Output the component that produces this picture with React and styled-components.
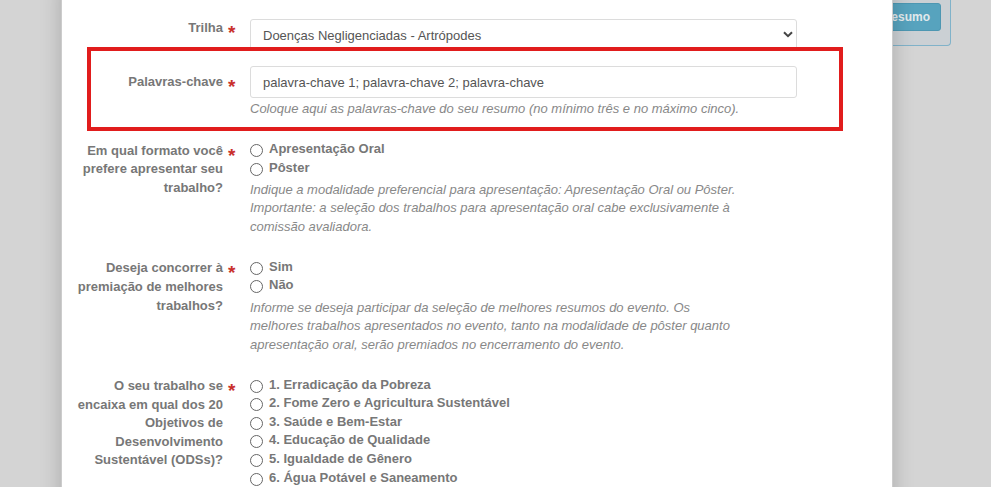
import React from "react";
import styled, { createGlobalStyle } from "styled-components";

const GlobalStyle = createGlobalStyle`
  html, body { margin: 0; padding: 0; }
  body {
    background: #d4d4d4;
    font-family: "Liberation Sans", Arial, sans-serif;
    overflow: hidden;
  }
  * { box-sizing: border-box; }
`;

const Page = styled.div`
  position: relative;
  width: 991px;
  height: 487px;
  overflow: hidden;
`;

const BackPage = styled.div`
  display: flex;
  justify-content: flex-end;
  padding-right: 40px;
`;

const BackPanel = styled.div`
  width: 240px;
  height: 46px;
  background: #cbd0d4;
  border: 1px solid #80b2c9;
  border-top: 0;
  border-radius: 0 0 4px 4px;
  display: flex;
  justify-content: flex-end;
  align-items: flex-start;
  padding: 3px 9px 0 0;
`;

const BackButton = styled.button`
  height: 28px;
  padding: 0 10px;
  background: #57a3be;
  border: 1px solid #4d97b2;
  border-radius: 3px;
  color: #e2e9ec;
  font: bold 12px "Liberation Sans", Arial, sans-serif;
`;

const Modal = styled.div`
  position: absolute;
  top: -20px;
  bottom: -20px;
  left: 61px;
  width: 832px;
  background: #fff;
  border: 1px solid rgba(0, 0, 0, 0.2);
  box-shadow: 0 5px 20px rgba(0, 0, 0, 0.2);
  padding: 38px 0 0 14px;
`;

const Highlight = styled.div`
  position: absolute;
  left: 25px;
  top: 66px;
  width: 756px;
  height: 84px;
  border: 4px solid #e11d1d;
  pointer-events: none;
`;

const Group = styled.div`
  display: grid;
  grid-template-columns: 147px 547px;
  column-gap: 27px;
  margin-bottom: 15px;
`;

const Label = styled.label`
  position: relative;
  text-align: right;
  font-weight: bold;
  font-size: 13px;
  line-height: 1.42857;
  color: #777;
  padding-top: ${(p) => p.$pt}px;
`;

const Star = styled.span`
  position: absolute;
  left: calc(100% + 5px);
  top: ${(p) => p.$pt + 4}px;
  font-size: 19px;
  line-height: 1;
  font-weight: bold;
  color: #c9302c;
`;

const Field = styled.div`
  display: flex;
  flex-direction: column;
`;

const SelectWrap = styled.div`
  position: relative;
`;

const Select = styled.select`
  appearance: none;
  -webkit-appearance: none;
  width: 100%;
  height: 32px;
  border: 1px solid #dcdcdc;
  border-radius: 3px;
  background: #fff;
  padding: 0 30px 0 12px;
  font: 13px "Liberation Sans", Arial, sans-serif;
  color: #555;
  outline: none;
`;

const Chevron = styled.svg`
  position: absolute;
  right: 4px;
  top: 12px;
  pointer-events: none;
`;

const Input = styled.input`
  width: 100%;
  height: 32px;
  border: 1px solid #dcdcdc;
  border-radius: 3px;
  background: #fff;
  padding: 0 12px;
  font: 13px "Liberation Sans", Arial, sans-serif;
  color: #555;
  outline: none;
`;

const Help = styled.p`
  margin: ${(p) => p.$mt}px 0 1px;
  max-width: 492px;
  font-style: italic;
  font-size: 13px;
  line-height: 1.42857;
  color: #888;
`;

const RadioList = styled.div`
  padding-top: 5.5px;
  display: flex;
  flex-direction: column;
`;

const RadioItem = styled.label`
  display: flex;
  align-items: flex-start;
  font-weight: bold;
  font-size: 13px;
  line-height: 1.42857;
  color: #777;
`;

const RadioCircle = styled.input`
  appearance: none;
  -webkit-appearance: none;
  flex: none;
  width: 13px;
  height: 13px;
  margin: 4px 6px 0 0;
  border: 1px solid #666;
  border-radius: 50%;
  background: #fff;
`;

function FieldLabel({ children, pt }) {
  return (
    <Label $pt={pt}>
      {children}
      <Star $pt={pt}>*</Star>
    </Label>
  );
}

function RadioGroup({ name, options }) {
  return (
    <RadioList>
      {options.map((o) => (
        <RadioItem key={o}>
          <RadioCircle type="radio" name={name} />
          {o}
        </RadioItem>
      ))}
    </RadioList>
  );
}

const ods = [
  "1. Erradicação da Pobreza",
  "2. Fome Zero e Agricultura Sustentável",
  "3. Saúde e Bem-Estar",
  "4. Educação de Qualidade",
  "5. Igualdade de Gênero",
  "6. Água Potável e Saneamento",
];

export default function App() {
  return (
    <Page>
      <GlobalStyle />
      <BackPage>
        <BackPanel>
          <BackButton>Enviar Resumo</BackButton>
        </BackPanel>
      </BackPage>
      <Modal>
        <Group>
          <FieldLabel pt={0}>Trilha</FieldLabel>
          <Field>
            <SelectWrap>
              <Select defaultValue="a">
                <option value="a">Doenças Negligenciadas - Artrópodes</option>
              </Select>
              <Chevron width="10" height="7" viewBox="0 0 10 7">
                <path d="M1 1.2 L5 5.2 L9 1.2" fill="none" stroke="#444" strokeWidth="2" />
              </Chevron>
            </SelectWrap>
          </Field>
        </Group>
        <Group>
          <FieldLabel pt={7}>Palavras-chave</FieldLabel>
          <Field>
            <Input defaultValue="palavra-chave 1; palavra-chave 2; palavra-chave" />
            <Help $mt={2}>
              Coloque aqui as palavras-chave do seu resumo (no mínimo três e no máximo cinco).
            </Help>
          </Field>
        </Group>
        <Group>
          <FieldLabel pt={7}>Em qual formato você prefere apresentar seu trabalho?</FieldLabel>
          <Field>
            <RadioGroup name="formato" options={["Apresentação Oral", "Pôster"]} />
            <Help $mt={3.5}>
              Indique a modalidade preferencial para apresentação: Apresentação Oral ou Pôster.
              Importante: a seleção dos trabalhos para apresentação oral cabe exclusivamente à
              comissão avaliadora.
            </Help>
          </Field>
        </Group>
        <Group>
          <FieldLabel pt={7}>Deseja concorrer à premiação de melhores trabalhos?</FieldLabel>
          <Field>
            <RadioGroup name="premio" options={["Sim", "Não"]} />
            <Help $mt={3.5}>
              Informe se deseja participar da seleção de melhores resumos do evento. Os melhores
              trabalhos apresentados no evento, tanto na modalidade de pôster quanto apresentação
              oral, serão premiados no encerramento do evento.
            </Help>
          </Field>
        </Group>
        <Group>
          <FieldLabel pt={7}>
            O seu trabalho se encaixa em qual dos 20 Objetivos de Desenvolvimento Sustentável (ODSs)?
          </FieldLabel>
          <Field>
            <RadioGroup name="ods" options={ods} />
          </Field>
        </Group>
        <Highlight />
      </Modal>
    </Page>
  );
}
